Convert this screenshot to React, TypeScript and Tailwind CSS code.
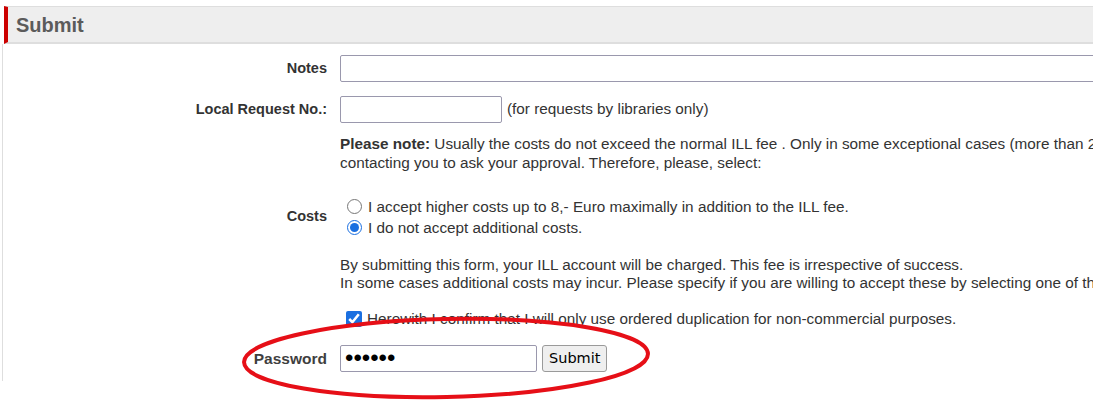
import React from "react";

const font = { fontFamily: '"Liberation Sans", Arial, sans-serif' };

function Row({
  label,
  children,
  className = "",
  labelClass = "text-[14.5px] text-[#333]",
}: {
  label?: string;
  children: React.ReactNode;
  className?: string;
  labelClass?: string;
}) {
  return (
    <div className={`grid grid-cols-[324px_1fr] items-center gap-x-[13px] ${className}`}>
      <div className={`text-right font-bold ${labelClass}`}>{label}</div>
      <div>{children}</div>
    </div>
  );
}

export default function App() {
  return (
    <div className="relative h-[417px] w-[1093px] overflow-hidden bg-white text-[#333]" style={font}>
      <div className="w-[1400px] pt-[6px]">
        {/* Section header */}
        <div className="ml-[4px] flex h-[38px] items-center border-t border-b-2 border-l-4 border-[#dedede] border-l-[#cc0000] bg-[#eeeeee] pl-[8px]">
          <h2 className="text-[20px] font-bold text-[#5b5b5b]">Submit</h2>
        </div>

        {/* Form body */}
        <div className="ml-[2px] h-[337px] border-l border-[#dedede] pt-[11px]">
          <Row label="Notes">
            <input className="h-[27px] w-full rounded-[2px] border border-[#9a98ad] bg-white" />
          </Row>

          <Row label="Local Request No.:" className="mt-[14px]">
            <div className="flex items-center gap-[5px] text-[15.3px]">
              <input className="h-[27px] w-[162px] rounded-[2px] border border-[#9a98ad] bg-white" />
              <span>(for requests by libraries only)</span>
            </div>
          </Row>

          <Row className="mt-[11px]">
            <p className="whitespace-nowrap text-[15.3px] leading-[19px]">
              <b>Please note:</b> Usually the costs do not exceed the normal ILL fee . Only in some exceptional cases (more than 20 Euro) we will be
              <br />
              contacting you to ask your approval. Therefore, please, select:
            </p>
          </Row>

          <Row label="Costs" className="mt-[24px]">
            <div className="pl-[7px] text-[15.3px] leading-[21px]">
              <label className="flex items-center gap-[6px]">
                <input type="radio" name="costs" className="m-0 h-[15px] w-[15px]" />
                I accept higher costs up to 8,- Euro maximally in addition to the ILL fee.
              </label>
              <label className="flex items-center gap-[6px]">
                <input type="radio" name="costs" defaultChecked className="m-0 h-[15px] w-[15px] accent-[#1a6fe0]" />
                I do not accept additional costs.
              </label>
            </div>
          </Row>

          <Row className="mt-[18px]">
            <p className="whitespace-nowrap text-[15.3px] leading-[18px]">
              By submitting this form, your ILL account will be charged. This fee is irrespective of success.
              <br />
              In some cases additional costs may incur. Please specify if you are willing to accept these by selecting one of the options above.
            </p>
          </Row>

          <Row className="mt-[16px]">
            <label className="flex items-center gap-[5px] whitespace-nowrap pl-[6px] text-[15.3px]">
              <input type="checkbox" defaultChecked className="m-0 h-[16px] w-[16px] accent-[#1a6fe0]" />
              Herewith I confirm that I will only use ordered duplication for non-commercial purposes.
            </label>
          </Row>

          <Row label="Password" className="mt-[14px]" labelClass="text-[15.5px] text-[#3f3f3f]">
            <div className="flex items-center gap-[5px]">
              <input
                type="password"
                defaultValue="secret"
                className="h-[27px] w-[197px] rounded-[2px] border border-[#9a98ad] bg-white px-[4px] py-0 text-[24px] leading-none text-black"
              />
              <button
                className="h-[27px] rounded-[3px] border border-[#9a9a9a] bg-[#efefef] px-[6px] text-[14.5px] text-black"
                style={{ fontFamily: '"DejaVu Sans", Verdana, sans-serif' }}
              >
                Submit
              </button>
            </div>
          </Row>
        </div>
      </div>

      {/* Red highlight ellipse */}
      <svg className="pointer-events-none absolute left-[238px] top-[314px]" width="416" height="90" viewBox="0 0 416 90">
        <ellipse cx="208" cy="44" rx="202" ry="39" fill="none" stroke="#e60f17" strokeWidth="4" transform="rotate(-1.2 208 44)" />
      </svg>
    </div>
  );
}
